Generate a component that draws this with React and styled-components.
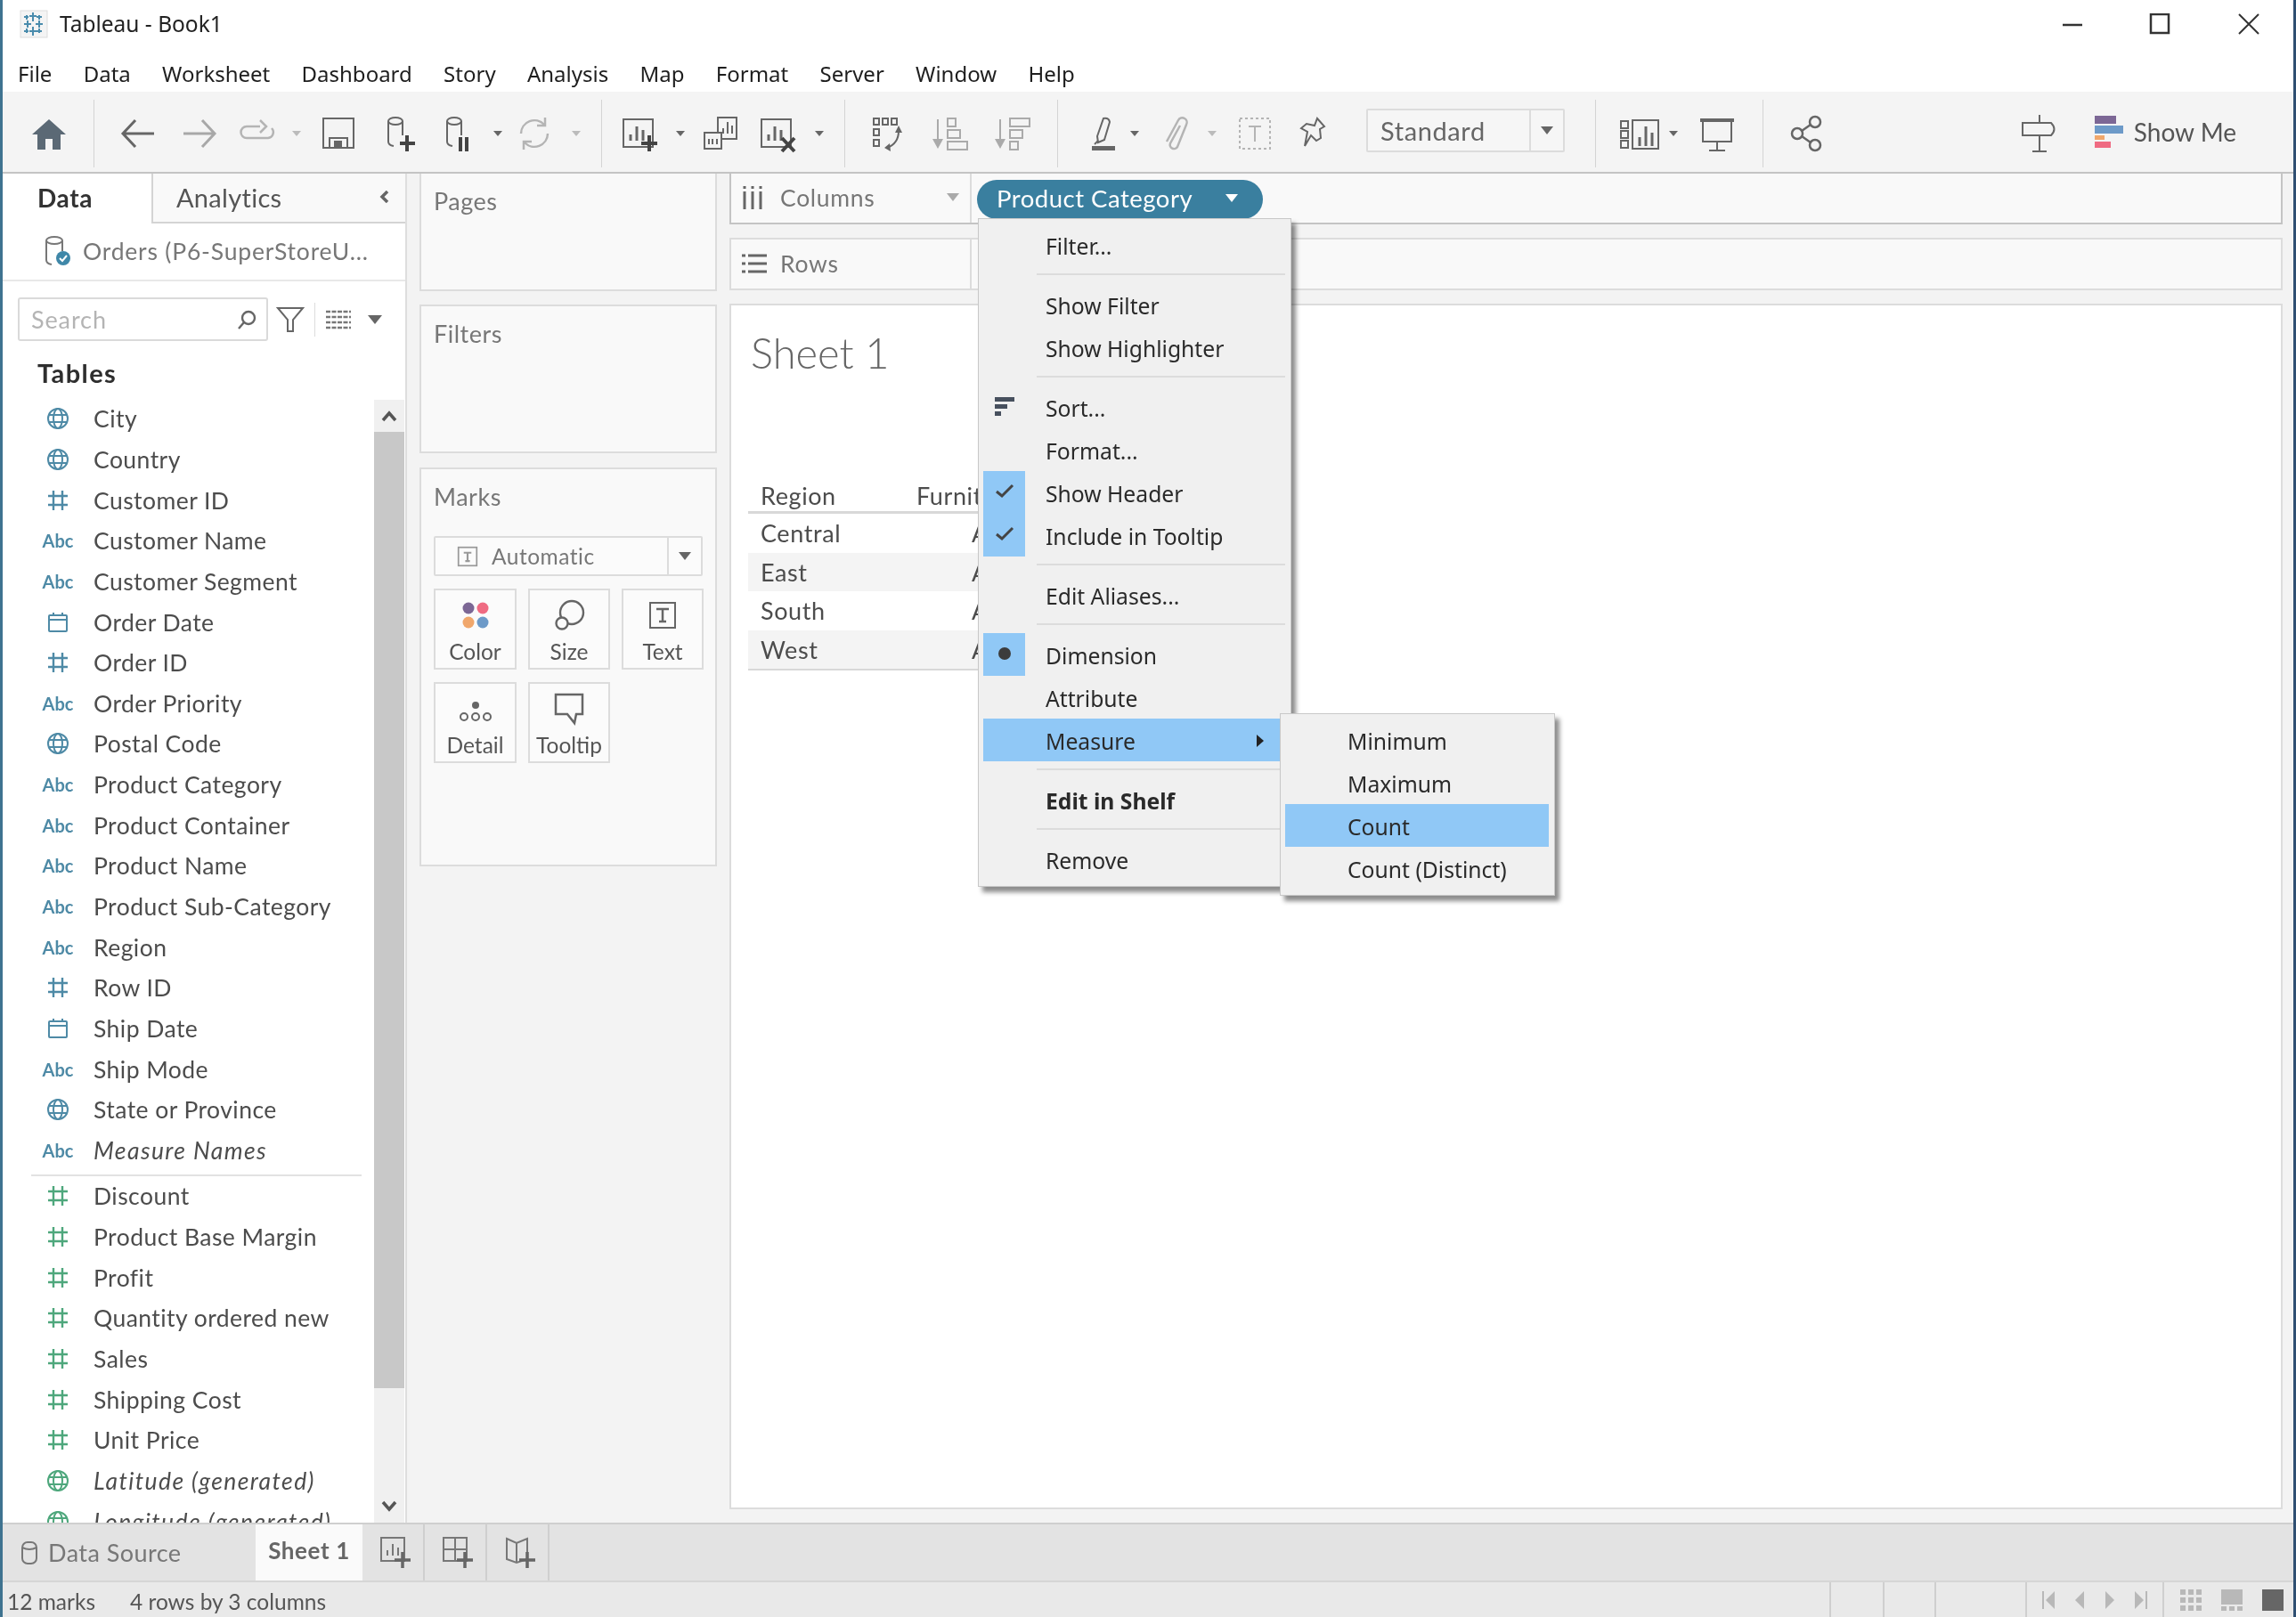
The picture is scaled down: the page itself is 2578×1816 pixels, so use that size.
import React from 'react';
import styled, { createGlobalStyle } from 'styled-components';

const GlobalStyle = createGlobalStyle`
    html, body {
        margin : 0;
        padding : 0;
        background : #fff;
        overflow : hidden;
    }
`;

const Shell = styled.div`
    position : relative;
    width : 2578px;
    height : 1816px;
    box-sizing : border-box;
    display : flex;
    flex-direction : column;
    overflow : hidden;
    border-left : 3px solid #3f7390;
    border-right : 3px solid #2f4f72;
    background : #f3f3f3;
    font-family : 'Lato', 'Liberation Sans', sans-serif;
    filter : blur(0.7px);
`;

const TitleBar = styled.div`
    height : 56px;
    box-sizing : border-box;
    background : #fff;
    display : flex;
    align-items : center;
    padding-left : 19px;
    padding-bottom : 3px;
    font-family : 'Noto Sans', 'Liberation Sans', sans-serif;
    font-size : 24.5px;
    color : #222;
`;

const TitleText = styled.span`
    margin-left : 13px;
`;

const WindowControls = styled.div`
    margin-left : auto;
    display : flex;
    align-items : center;
    padding-right : 38px;
    gap : 64px;
`;

const MenuBar = styled.div`
    height : 47px;
    background : #fff;
    display : flex;
    align-items : center;
    gap : 35.3px;
    padding-left : 17px;
    padding-top : 5px;
    box-sizing : border-box;
    font-family : 'Noto Sans', 'Liberation Sans', sans-serif;
    font-size : 24px;
    color : #1e1e1e;
`;

const Toolbar = styled.div`
    height : 90px;
    background : #f4f4f4;
    display : flex;
    align-items : center;
    padding-right : 64px;
    flex : none;
`;

const ToolSlot = styled.div`
    width : 44px;
    height : 44px;
    flex : none;
    margin-left : ${p => (p.$push ? 'auto' : `${p.$gap || 0}px`)};
    margin-top : 4px;
`;

const ToolCaret = styled.div`
    width : 16px;
    flex : none;
    display : flex;
    justify-content : center;
    margin-left : ${p => p.$gap || 0}px;
    margin-top : 4px;
`;

const Caret = styled.span`
    display : block;
    width : 0;
    height : 0;
    border-left : ${p => p.$size || 5}px solid transparent;
    border-right : ${p => p.$size || 5}px solid transparent;
    border-top : ${p => (p.$size || 5) * 1.3}px solid ${p => p.$color || '#666'};
`;

const ToolSep = styled.div`
    width : 1px;
    height : 76px;
    flex : none;
    background : #d4d4d4;
    margin-left : ${p => p.$gap || 0}px;
    margin-top : 4px;
`;

const StandardSelect = styled.div`
    width : 223px;
    height : 49px;
    flex : none;
    box-sizing : border-box;
    margin-left : ${p => p.$gap}px;
    margin-top : -3px;
    background : #f6f6f6;
    border : 2px solid #dcdcdc;
    border-radius : 2px;
    display : flex;
    align-items : center;
    padding-left : 14px;
    font-size : 29px;
    letter-spacing : .6px;
    color : #666;
`;

const SelectButton = styled.div`
    margin-left : auto;
    width : 36px;
    height : 100%;
    border-left : 2px solid #dcdcdc;
    display : flex;
    align-items : center;
    justify-content : center;
`;

const ShowMe = styled.div`
    margin-left : 40px;
    display : flex;
    align-items : center;
    gap : 12px;
    font-size : 28px;
    color : #555;
`;

const Main = styled.div`
    flex : 1;
    min-height : 0;
    display : flex;
    border-top : 2px solid #c4c4c4;
`;

const Sidebar = styled.div`
    width : 454px;
    flex : none;
    background : #fff;
    border-right : 2px solid #dedede;
    box-sizing : border-box;
    display : flex;
    flex-direction : column;
    min-height : 0;
`;

const TabRow = styled.div`
    height : 56px;
    flex : none;
    display : flex;
`;

const DataTab = styled.div`
    width : 167px;
    box-sizing : border-box;
    padding : 0 0 3px 39px;
    display : flex;
    align-items : center;
    font-size : 28px;
    font-weight : 700;
    letter-spacing : .6px;
    color : #333;
`;

const AnalyticsTab = styled.div`
    flex : 1;
    box-sizing : border-box;
    padding : 0 14px 2px 26px;
    display : flex;
    align-items : center;
    justify-content : space-between;
    background : #f9f9f9;
    border-left : 2px solid #d4d4d4;
    border-bottom : 2px solid #d4d4d4;
    font-size : 29px;
    letter-spacing : .3px;
    color : #555;
`;

const SourceRow = styled.div`
    height : 65px;
    flex : none;
    box-sizing : border-box;
    display : flex;
    align-items : center;
    padding-left : 47px;
    gap : 13px;
    border-bottom : 2px solid #e8e8e8;
    font-size : 26.5px;
    letter-spacing : .8px;
    color : #777;
    padding-bottom : 2px;
`;

const SearchRow = styled.div`
    height : 68px;
    flex : none;
    display : flex;
    align-items : center;
    padding-left : 17px;
    padding-top : 17px;
    box-sizing : border-box;
`;

const SearchBox = styled.div`
    width : 281px;
    height : 49px;
    box-sizing : border-box;
    border : 2px solid #dadada;
    border-radius : 3px;
    display : flex;
    align-items : center;
    justify-content : space-between;
    padding : 0 10px 0 13px;
    font-size : 27px;
    letter-spacing : .9px;
    color : #b4b4b4;
`;

const SearchSep = styled.div`
    width : 1px;
    height : 38px;
    background : #dcdcdc;
    margin : 0 12px 0 11px;
`;

const TablesTitle = styled.div`
    height : 63.5px;
    flex : none;
    box-sizing : border-box;
    padding : 6px 0 0 39px;
    display : flex;
    align-items : center;
    font-size : 29px;
    font-weight : 700;
    letter-spacing : 1.4px;
    color : #2e2e2e;
`;

const FieldArea = styled.div`
    flex : 1;
    min-height : 0;
    display : flex;
    overflow : hidden;
`;

const FieldList = styled.div`
    flex : 1;
    min-width : 0;
    overflow : hidden;
`;

const FieldRow = styled.div`
    height : 45.65px;
    display : flex;
    align-items : center;
    font-size : 26.5px;
    letter-spacing : ${p => (p.$italic ? '1.4px' : '.45px')};
    color : #4c4c4c;
    font-style : ${p => (p.$italic ? 'italic' : 'normal')};
`;

const FieldIcon = styled.div`
    width : 66px;
    flex : none;
    margin-left : 29px;
    margin-right : 7px;
    display : flex;
    justify-content : center;
`;

const AbcIcon = styled.span`
    font-size : 20px;
    font-weight : 700;
    font-style : normal;
    letter-spacing : 0;
    color : #4e8aa6;
`;

const FieldDivider = styled.div`
    height : 4px;
    margin : 0 14px 0 32px;
    border-bottom : 2px solid #e2e2e2;
`;

const ScrollBar = styled.div`
    width : 34px;
    flex : none;
    display : flex;
    flex-direction : column;
    background : #f0f0f0;
    margin : 1px 1px 0 0;
`;

const ScrollButton = styled.div`
    height : ${p => p.$h}px;
    flex : none;
    display : flex;
    align-items : center;
    justify-content : center;
`;

const ScrollThumb = styled.div`
    height : 1074px;
    flex : none;
    background : #c8c8c8;
`;

const ShelfColumn = styled.div`
    width : 334px;
    flex : none;
    margin-left : 14px;
    display : flex;
    flex-direction : column;
    gap : 15px;
`;

const Card = styled.div`
    height : ${p => p.$h}px;
    flex : none;
    box-sizing : border-box;
    background : #f9f9f9;
    border : 2px solid #dcdcdc;
    padding : 14px 14px 0;
    font-size : 27px;
    letter-spacing : .5px;
    color : #777;
`;

const TopCard = styled(Card)`
    border-top : none;
    padding-top : 14px;
`;

const MarksCard = styled(Card)`
    margin-top : 1px;
`;

const MarksSelect = styled.div`
    height : 45px;
    box-sizing : border-box;
    margin-top : 28px;
    background : #fbfbfb;
    border : 2px solid #dcdcdc;
    border-radius : 2px;
    display : flex;
    align-items : center;
    padding-left : 24px;
    gap : 15px;
    font-size : 24.5px;
    color : #777;
`;

const MarksGrid = styled.div`
    margin-top : 14px;
    display : grid;
    grid-template-columns : 93px 92px 92px;
    grid-auto-rows : 91px;
    column-gap : 13px;
    row-gap : 14px;
`;

const MarkCard = styled.div`
    box-sizing : border-box;
    border : 2px solid #dcdcdc;
    background : #fbfbfb;
    display : flex;
    flex-direction : column;
    align-items : center;
    font-size : 24.5px;
    letter-spacing : 0;
    color : #555;
`;

const MarkIconBox = styled.div`
    height : 44px;
    margin-top : 6px;
    margin-bottom : 4px;
`;

const ViewColumn = styled.div`
    flex : 1;
    min-width : 0;
    margin-left : 14px;
    margin-right : 12px;
    display : flex;
    flex-direction : column;
    gap : 15px;
    padding-bottom : 15px;
`;

const Shelf = styled.div`
    height : ${p => p.$h}px;
    flex : none;
    box-sizing : border-box;
    display : flex;
    background : #f9f9f9;
    border : 2px solid ${p => (p.$active ? '#c4c4c4' : '#dcdcdc')};
    border-top : ${p => (p.$active ? 'none' : '2px solid #dcdcdc')};
`;

const ShelfLabel = styled.div`
    width : 270px;
    flex : none;
    box-sizing : border-box;
    border-right : 2px solid #dcdcdc;
    display : flex;
    align-items : center;
    padding : 0 0 2px 12px;
    gap : ${p => p.$gap}px;
    font-size : 26.5px;
    letter-spacing : .7px;
    color : #777;
`;

const ShelfCaret = styled.div`
    margin-left : auto;
    margin-right : 12px;
`;

const Pill = styled.div`
    width : 321px;
    height : 44px;
    margin : 7px 0 0 6px;
    box-sizing : border-box;
    padding : 0 28px 3px 22px;
    background : #3a7f9f;
    border-radius : 22px;
    display : flex;
    align-items : center;
    justify-content : space-between;
    font-size : 27.5px;
    letter-spacing : .5px;
    color : #fff;
`;

const Canvas = styled.div`
    flex : 1;
    min-height : 0;
    box-sizing : border-box;
    background : #fff;
    border : 2px solid #dcdcdc;
    padding : 25px 0 0 22px;
`;

const SheetTitle = styled.div`
    height : 56px;
    line-height : 56px;
    font-size : 47px;
    font-weight : 300;
    color : #666;
`;

const VizTable = styled.div`
    margin-top : 115px;
    margin-left : -3px;
    width : 310px;
    font-size : 27px;
    letter-spacing : .6px;
    color : #4c4c4c;
`;

const VizRow = styled.div`
    height : 43.6px;
    display : flex;
    align-items : center;
    box-sizing : border-box;
    padding-left : 14px;
    background : ${p => (p.$shade ? '#f4f4f4' : '#fff')};
`;

const VizHeader = styled(VizRow)`
    height : 38px;
    border-bottom : 3px solid #d8d8d8;
`;

const VizBottom = styled.div`
    border-bottom : 2px solid #d8d8d8;
`;

const RowName = styled.span`
    width : 175px;
    flex : none;
`;

const RowValue = styled.span`
    margin-left : 62px;
`;

const Menu = styled.div`
    position : absolute;
    left : ${p => p.$x}px;
    top : ${p => p.$y}px;
    width : ${p => p.$w}px;
    box-sizing : border-box;
    padding : 5px 6px 6px 5px;
    background : #f0f0f0;
    border : 1px solid #c8c8c8;
    box-shadow : 5px 6px 5px rgba(0, 0, 0, .45);
    font-family : 'Noto Sans', 'Liberation Sans', sans-serif;
    font-size : 24.7px;
    color : #2a2a2a;
`;

const MenuRow = styled.div`
    height : 48px;
    box-sizing : border-box;
    padding-top : 2px;
    display : flex;
    align-items : center;
    background : ${p => (p.$hot ? '#90c8f6' : 'transparent')};
    font-weight : ${p => (p.$bold ? 700 : 400)};
`;

const MenuGutter = styled.div`
    width : 47px;
    height : 48px;
    margin-top : -2px;
    flex : none;
    display : flex;
    align-items : center;
    justify-content : center;
    margin-right : 23px;
    background : ${p => (p.$on ? '#90c8f6' : 'transparent')};
`;

const MenuSep = styled.div`
    height : 19px;
    box-sizing : border-box;
    margin-left : 60px;
    padding-top : 8px;
    &::after {
        content : '';
        display : block;
        height : 2px;
        background : #dcdcdc;
    }
`;

const SubmenuArrow = styled.span`
    margin-left : auto;
    margin-right : 24px;
    width : 0;
    height : 0;
    border-top : 7px solid transparent;
    border-bottom : 7px solid transparent;
    border-left : 8px solid #222;
`;

const SubRow = styled(MenuRow)`
    padding-left : 70px;
`;

const TabBar = styled.div`
    height : 65px;
    flex : none;
    display : flex;
    background : #e3e3e3;
    border-top : 2px solid #cfcfcf;
    box-sizing : border-box;
    font-size : 27px;
    letter-spacing : .45px;
    color : #777;
`;

const SourceTab = styled.div`
    width : 284px;
    flex : none;
    display : flex;
    align-items : center;
    padding-left : 20px;
    gap : 11px;
    box-sizing : border-box;
`;

const SheetTab = styled.div`
    width : 120px;
    flex : none;
    display : flex;
    align-items : center;
    justify-content : center;
    padding-bottom : 6px;
    box-sizing : border-box;
    background : #fafafa;
    font-weight : 700;
    font-size : 26px;
    letter-spacing : .6px;
    color : #666;
`;

const AddTab = styled.div`
    width : 70px;
    flex : none;
    box-sizing : border-box;
    border-right : 2px solid #cfcfcf;
    padding-left : 6px;
    display : flex;
    align-items : center;
    justify-content : center;
`;

const StatusBar = styled.div`
    height : 41px;
    flex : none;
    box-sizing : border-box;
    display : flex;
    align-items : center;
    background : #e9e9e9;
    border-top : 2px solid #d6d6d6;
    padding-left : 5px;
    font-size : 24.5px;
    color : #555;
`;

const StatusText = styled.span`
    margin-right : ${p => p.$gap || 0}px;
    margin-top : 4px;
`;

const StatusCell = styled.div`
    width : ${p => p.$w}px;
    flex : none;
    align-self : stretch;
    box-sizing : border-box;
    padding-left : ${p => p.$pad || 0}px;
    border-left : 2px solid #cfcfcf;
    display : flex;
    align-items : center;
    justify-content : center;
    gap : ${p => p.$gap || 0}px;
`;

const StatusFill = styled.div`
    flex : 1;
`;

const Svg = ({ w = 44, h = 44, c = '#666', sw = 2, children }) => (
    <svg width = {w} height = {h} viewBox = {`0 0 ${w} ${h}`} fill = 'none' stroke = {c} strokeWidth = {sw} style = {{ display : 'block' }}>
        {children}
    </svg>
);

const Cylinder = () => (
    <>
        <ellipse cx = '17' cy = '8' rx = '8' ry = '4'/>
        <path d = 'M9 8V31q0 4 6 5M25 8V24'/>
    </>
);

const LIGHT = '#b4b4b4';

const toolIcons = {
    home : (
        <Svg><path fill = '#5b6975' stroke = 'none' d = 'M22 6L41 23H35V40H26V28H18V40H9V23H3Z'/></Svg>
    ),
    back : (
        <Svg sw = {3}><path d = 'M40 22H5M19 7L5 22L19 37'/></Svg>
    ),
    forward : (
        <Svg sw = {3} c = '#a8a8a8'><path d = 'M4 22H39M25 7L39 22L25 37'/></Svg>
    ),
    redo : (
        <Svg c = {LIGHT} sw = {2.5}><path d = 'M25 14H10a6.5 6.5 0 0 0 0 13H34a6.5 6.5 0 0 0 4-11M25 7l7 7-7 7'/></Svg>
    ),
    save : (
        <Svg><rect x = '5' y = '5' width = '34' height = '33'/><rect x = '12' y = '27' width = '20' height = '11'/><rect x = '18' y = '31' width = '7' height = '7' fill = '#666'/></Svg>
    ),
    addSource : (
        <Svg>
            <Cylinder/>
            <path stroke = '#444' strokeWidth = '4' d = 'M30 24V42M22 33H39'/>
        </Svg>
    ),
    pauseSource : (
        <Svg>
            <Cylinder/>
            <path stroke = '#444' strokeWidth = '4' d = 'M24 26V42M31 26V42'/>
        </Svg>
    ),
    refresh : (
        <Svg c = {LIGHT} sw = {2.5}><path d = 'M7 22a15 15 0 0 1 26-10M37 22a15 15 0 0 1-26 10M34 4v9h-9M10 40v-9h9'/></Svg>
    ),
    newSheet : (
        <Svg>
            <rect x = '3' y = '6' width = '33' height = '31'/>
            <path strokeWidth = '3' d = 'M11 30V23M18 30V14M25 30V18'/>
            <path stroke = '#444' strokeWidth = '4' d = 'M32 24V42M23 33H41'/>
        </Svg>
    ),
    duplicate : (
        <Svg>
            <rect x = '19' y = '4' width = '21' height = '24'/>
            <path d = 'M25 22V16M30 22V9M35 22V13'/>
            <rect x = '4' y = '21' width = '19' height = '18' fill = '#f4f4f4'/>
            <path d = 'M9 34V28M13 34V28M18 34V28'/>
        </Svg>
    ),
    clear : (
        <Svg>
            <rect x = '3' y = '6' width = '33' height = '31'/>
            <path strokeWidth = '3' d = 'M11 30V23M18 30V14M25 30V18'/>
            <path stroke = '#444' strokeWidth = '4' d = 'M26 27L40 42M40 27L26 42'/>
        </Svg>
    ),
    swap : (
        <Svg>
            <rect x = '7' y = '5' width = '6' height = '7'/>
            <rect x = '17' y = '5' width = '6' height = '7'/>
            <rect x = '27' y = '5' width = '6' height = '7'/>
            <rect x = '7' y = '17' width = '6' height = '7'/>
            <rect x = '7' y = '29' width = '6' height = '7'/>
            <path d = 'M35 19c0 10-5 16-13 19'/>
            <path fill = '#666' stroke = 'none' d = 'M35 13l4 8h-8zM19 38l6-5 1 9z'/>
        </Svg>
    ),
    sortAsc : (
        <Svg c = '#aaa'>
            <path d = 'M8 6V36'/>
            <path fill = '#aaa' stroke = 'none' d = 'M2 28H14L8 39Z'/>
            <rect x = '19' y = '5' width = '9' height = '9'/>
            <rect x = '19' y = '18' width = '14' height = '9'/>
            <rect x = '19' y = '31' width = '22' height = '9'/>
        </Svg>
    ),
    sortDesc : (
        <Svg c = '#aaa'>
            <path d = 'M8 6V36'/>
            <path fill = '#aaa' stroke = 'none' d = 'M2 28H14L8 39Z'/>
            <rect x = '19' y = '5' width = '22' height = '9'/>
            <rect x = '19' y = '18' width = '14' height = '9'/>
            <rect x = '19' y = '31' width = '9' height = '9'/>
        </Svg>
    ),
    highlight : (
        <Svg>
            <path d = 'M24 5Q30 4 31 9L25 29L18 32L17 25Z'/>
            <path d = 'M14 34L18 30'/>
            <rect x = '11' y = '36' width = '26' height = '5' fill = '#666' stroke = 'none'/>
        </Svg>
    ),
    clip : (
        <Svg c = {LIGHT} sw = {2.5}>
            <path d = 'M29 13L18 33a4.5 4.5 0 0 0 8 4L36 12a5 5 0 0 0-9-5L14 31'/>
        </Svg>
    ),
    dashT : (
        <Svg c = {LIGHT}>
            <rect x = '5' y = '5' width = '34' height = '34' strokeDasharray = '3 3'/>
            <path d = 'M15 14H29M22 14V31'/>
        </Svg>
    ),
    pin : (
        <Svg>
            <path d = 'M27 5L35 14L30 17L31 27L26 30L20 24L13 36L16 20L9 16L15 11L24 13Z'/>
        </Svg>
    ),
    view : (
        <Svg>
            <rect x = '1' y = '8' width = '8' height = '8'/>
            <rect x = '1' y = '19' width = '8' height = '8'/>
            <rect x = '1' y = '30' width = '8' height = '8'/>
            <rect x = '14' y = '7' width = '29' height = '32'/>
            <path strokeWidth = '3' d = 'M22 36V26M29 36V14M36 36V21'/>
        </Svg>
    ),
    present : (
        <Svg>
            <path strokeWidth = '4' d = 'M4 7H42'/>
            <path d = 'M7 7V31H39V7M23 31V41M14 41H32'/>
        </Svg>
    ),
    share : (
        <Svg sw = {2.5}>
            <circle cx = '32' cy = '9' r = '6'/>
            <circle cx = '12' cy = '22' r = '6'/>
            <circle cx = '32' cy = '35' r = '6'/>
            <path d = 'M17 19L27 12M17 25L27 32'/>
        </Svg>
    ),
    sign : (
        <Svg>
            <path d = 'M22 1V10M22 24V42M14 42H30'/>
            <path d = 'M3 10H35Q42 17 35 24H3Z'/>
        </Svg>
    ),
};

const ShowMeIcon = () => (
    <svg width = '32' height = '36' viewBox = '0 0 32 36' style = {{ display : 'block' }}>
        <rect x = '0' y = '0' width = '24' height = '9' fill = '#7c6795'/>
        <rect x = '0' y = '11' width = '32' height = '9' fill = '#6d9ac8'/>
        <rect x = '0' y = '22' width = '11' height = '5' fill = '#f0a76c'/>
        <rect x = '0' y = '29' width = '18' height = '7' fill = '#ef6b82'/>
    </svg>
);

const TableauLogo = () => (
    <svg width = '32' height = '32' viewBox = '0 0 32 32' style = {{ display : 'block' }}>
        <rect x = '1' y = '1' width = '30' height = '30' fill = '#f4f4f4' stroke = '#ddd'/>
        <g stroke = '#4a8cad' strokeWidth = '2' fill = 'none'>
            <path d = 'M15 3V13M11 7H19M15 19V29M11 24H19M5 16H13M9 12V20M18 16H26M22 12V20M8 6V11M5 8H10M22 6V11M19 8H25M8 21V26M5 24H10M22 21V26M19 24H25'/>
        </g>
    </svg>
);

const Globe = ({ c }) => (
    <Svg w = {26} h = {26} c = {c} sw = {2}>
        <circle cx = '13' cy = '13' r = '11'/>
        <ellipse cx = '13' cy = '13' rx = '5' ry = '11'/>
        <path d = 'M3 9H23M3 17H23'/>
    </Svg>
);

const Hash = ({ c }) => (
    <Svg w = {26} h = {26} c = {c} sw = {2.4}>
        <path d = 'M8 2V24M18 2V24M2 8H24M2 18H24'/>
    </Svg>
);

const Calendar = ({ c }) => (
    <Svg w = {26} h = {26} c = {c} sw = {2}>
        <rect x = '3' y = '5' width = '20' height = '18' rx = '1'/>
        <path d = 'M3 10H23M8 2V6M18 2V6'/>
    </Svg>
);

const CylinderSmall = () => (
    <svg width = '20' height = '28' viewBox = '0 0 20 28' fill = 'none' stroke = '#777' strokeWidth = '2' style = {{ display : 'block' }}>
        <rect x = '2' y = '2' width = '16' height = '24' rx = '6'/>
        <path d = 'M2 8Q10 12 18 8'/>
    </svg>
);

const SourceIcon = () => (
    <svg width = '30' height = '36' viewBox = '0 0 30 36' fill = 'none' stroke = '#777' strokeWidth = '2' style = {{ display : 'block' }}>
        <ellipse cx = '11' cy = '6' rx = '9' ry = '4'/>
        <path d = 'M2 6V28q0 4 6 5M20 6V18'/>
        <circle cx = '21' cy = '26' r = '8' fill = '#3f87a8' stroke = 'none'/>
        <path stroke = '#fff' d = 'M17 26l3 3 5-6'/>
    </svg>
);

const SearchIcon = () => (
    <svg width = '24' height = '24' viewBox = '0 0 24 24' fill = 'none' stroke = '#666' strokeWidth = '2.4' style = {{ display : 'block' }}>
        <circle cx = '14' cy = '10' r = '7'/>
        <path d = 'M9 15L3 22'/>
    </svg>
);

const FunnelIcon = () => (
    <svg width = '32' height = '30' viewBox = '0 0 32 30' fill = 'none' stroke = '#666' strokeWidth = '2' style = {{ display : 'block', marginLeft : 9 }}>
        <path d = 'M2 2H30L19 15V28H13V15Z'/>
    </svg>
);

const ListIcon = () => (
    <svg width = '28' height = '22' viewBox = '0 0 28 22' stroke = '#777' strokeWidth = '2.5' strokeDasharray = '5 1.5' fill = 'none' style = {{ display : 'block' }}>
        <path d = 'M0 2H28M0 8H28M0 14H28M0 20H28'/>
    </svg>
);

const Chevron = ({ d, c = '#555' }) => (
    <svg width = '18' height = '14' viewBox = '0 0 18 14' fill = 'none' stroke = {c} strokeWidth = '3.5' style = {{ display : 'block' }}>
        <path d = {d}/>
    </svg>
);

const ColumnsIcon = () => (
    <svg width = '24' height = '28' viewBox = '0 0 24 28' fill = 'none' stroke = '#666' strokeWidth = '3' style = {{ display : 'block' }}>
        <path d = 'M3 7V27M12 7V27M21 7V27M3 1V4M12 1V4M21 1V4'/>
    </svg>
);

const RowsIcon = () => (
    <svg width = '28' height = '24' viewBox = '0 0 28 24' fill = 'none' stroke = '#666' strokeWidth = '3' style = {{ display : 'block' }}>
        <path d = 'M7 3H28M7 12H28M7 21H28M0 3H4M0 12H4M0 21H4'/>
    </svg>
);

const TIcon = ({ c = '#777', size = 28 }) => (
    <svg width = {size} height = {size} viewBox = '0 0 28 28' fill = 'none' stroke = {c} strokeWidth = '2' style = {{ display : 'block' }}>
        <rect x = '2' y = '2' width = '24' height = '24'/>
        <path strokeWidth = '2.5' d = 'M9 9H19M14 9V20M11 20H17'/>
    </svg>
);

const markIcons = {
    Color : (
        <svg width = '44' height = '44' viewBox = '0 0 44 44' style = {{ display : 'block' }}>
            <circle cx = '14' cy = '14' r = '6.5' fill = '#7c6795'/>
            <circle cx = '30' cy = '14' r = '6.5' fill = '#ef6b82'/>
            <circle cx = '14' cy = '30' r = '6.5' fill = '#f0a76c'/>
            <circle cx = '30' cy = '30' r = '6.5' fill = '#6d9ac8'/>
        </svg>
    ),
    Size : (
        <Svg sw = {2.4}>
            <circle cx = '25' cy = '19' r = '13'/>
            <circle cx = '14' cy = '31' r = '6.5' fill = '#fbfbfb'/>
        </Svg>
    ),
    Text : (
        <Svg>
            <rect x = '8' y = '8' width = '28' height = '28'/>
            <path strokeWidth = '2.5' d = 'M15 15H29M22 15V29M18 29H26'/>
        </Svg>
    ),
    Detail : (
        <Svg>
            <circle cx = '22' cy = '18' r = '4' fill = '#666' stroke = 'none'/>
            <circle cx = '9' cy = '31' r = '4'/>
            <circle cx = '22' cy = '31' r = '4'/>
            <circle cx = '35' cy = '31' r = '4'/>
        </Svg>
    ),
    Tooltip : (
        <Svg sw = {2.5}>
            <path d = 'M7 6H37V28H30L28 38L20 28H7Z'/>
        </Svg>
    ),
};

const BLUE = '#4e8aa6';
const GREEN = '#4ea77c';

const dimensions = [
    ['globe', 'City'],
    ['globe', 'Country'],
    ['hash', 'Customer ID'],
    ['abc', 'Customer Name'],
    ['abc', 'Customer Segment'],
    ['date', 'Order Date'],
    ['hash', 'Order ID'],
    ['abc', 'Order Priority'],
    ['globe', 'Postal Code'],
    ['abc', 'Product Category'],
    ['abc', 'Product Container'],
    ['abc', 'Product Name'],
    ['abc', 'Product Sub-Category'],
    ['abc', 'Region'],
    ['hash', 'Row ID'],
    ['date', 'Ship Date'],
    ['abc', 'Ship Mode'],
    ['globe', 'State or Province'],
    ['abc', 'Measure Names', true],
];

const measures = [
    ['hash', 'Discount'],
    ['hash', 'Product Base Margin'],
    ['hash', 'Profit'],
    ['hash', 'Quantity ordered new'],
    ['hash', 'Sales'],
    ['hash', 'Shipping Cost'],
    ['hash', 'Unit Price'],
    ['globe', 'Latitude (generated)', true],
    ['globe', 'Longitude (generated)', true],
];

const Field = ({ type, name, italic, color }) => (
    <FieldRow $italic = {italic}>
        <FieldIcon>
            {type === 'globe' && <Globe c = {color}/>}
            {type === 'hash' && <Hash c = {color}/>}
            {type === 'date' && <Calendar c = {color}/>}
            {type === 'abc' && <AbcIcon>Abc</AbcIcon>}
        </FieldIcon>
        {name}
    </FieldRow>
);

const menuBarItems = ['File', 'Data', 'Worksheet', 'Dashboard', 'Story', 'Analysis', 'Map', 'Format', 'Server', 'Window', 'Help'];

const Check = () => (
    <svg width = '24' height = '20' viewBox = '0 0 24 20' fill = 'none' stroke = '#444' strokeWidth = '3' style = {{ display : 'block', marginTop : -4 }}>
        <path d = 'M3 11L9 16L21 4'/>
    </svg>
);

const SortGlyph = () => (
    <svg width = '24' height = '22' viewBox = '0 0 24 22' fill = '#47505e' style = {{ display : 'block', marginTop : -2 }}>
        <rect x = '1' y = '1' width = '22' height = '5'/>
        <rect x = '1' y = '9' width = '14' height = '5'/>
        <rect x = '1' y = '17' width = '7' height = '5'/>
    </svg>
);

const Dot = () => (
    <svg width = '16' height = '16' viewBox = '0 0 16 16' style = {{ display : 'block', marginTop : -2 }}>
        <circle cx = '8' cy = '8' r = '7' fill = '#3c3c3c'/>
    </svg>
);

const MItem = ({ icon, on, hot, bold, children, arrow }) => (
    <MenuRow $hot = {hot} $bold = {bold}>
        <MenuGutter $on = {on}>{icon}</MenuGutter>
        {children}
        {arrow && <SubmenuArrow/>}
    </MenuRow>
);

const NavIcon = ({ d }) => (
    <svg width = '16' height = '24' viewBox = '0 0 16 24' fill = '#b8b8b8' style = {{ display : 'block' }}>
        <path d = {d}/>
    </svg>
);

const GridIcon = ({ big, dark }) => (
    <svg width = '26' height = '26' viewBox = '0 0 26 26' fill = {dark ? '#666' : '#b8b8b8'} style = {{ display : 'block' }}>
        {dark && <rect x = '1' y = '1' width = '24' height = '24'/>}
        {big && <><rect x = '1' y = '1' width = '24' height = '17'/><rect x = '1' y = '20' width = '6' height = '5'/><rect x = '10' y = '20' width = '6' height = '5'/><rect x = '19' y = '20' width = '6' height = '5'/></>}
        {!big && !dark && [1, 10, 19].map(y => [1, 10, 19].map(x => <rect key = {`${x}-${y}`} x = {x} y = {y} width = '6' height = '6'/>))}
    </svg>
);

const TabIcon = ({ children }) => (
    <svg width = '36' height = '38' viewBox = '0 0 36 38' fill = 'none' stroke = '#777' strokeWidth = '2' style = {{ display : 'block' }}>
        {children}
        <path stroke = '#666' strokeWidth = '3.5' d = 'M26 18V36M17 27H35'/>
    </svg>
);

const App = () => {
    return (
        <Shell>
            <GlobalStyle/>
            <TitleBar>
                <TableauLogo/>
                <TitleText>Tableau - Book1</TitleText>
                <WindowControls>
                    <svg width = '24' height = '24' viewBox = '0 0 24 24' stroke = '#333' strokeWidth = '2.5' fill = 'none' style = {{ display : 'block', marginRight : 10 }}><path d = 'M1 13H23'/></svg>
                    <svg width = '24' height = '24' viewBox = '0 0 24 24' stroke = '#333' strokeWidth = '2.5' fill = 'none' style = {{ display : 'block', marginRight : 12 }}><rect x = '2' y = '1' width = '20' height = '21'/></svg>
                    <svg width = '24' height = '24' viewBox = '0 0 24 24' stroke = '#333' strokeWidth = '2' fill = 'none' style = {{ display : 'block' }}><path d = 'M1 1L23 23M23 1L1 23'/></svg>
                </WindowControls>
            </TitleBar>
            <MenuBar>
                {menuBarItems.map(item => <span key = {item}>{item}</span>)}
            </MenuBar>
            <Toolbar>
                <ToolSlot $gap = {30}>{toolIcons.home}</ToolSlot>
                <ToolSep $gap = {28}/>
                <ToolSlot $gap = {27}>{toolIcons.back}</ToolSlot>
                <ToolSlot $gap = {25}>{toolIcons.forward}</ToolSlot>
                <ToolSlot $gap = {21}>{toolIcons.redo}</ToolSlot>
                <ToolCaret $gap = {14}><Caret $color = '#bbb'/></ToolCaret>
                <ToolSlot $gap = {17}>{toolIcons.save}</ToolSlot>
                <ToolSlot $gap = {25}>{toolIcons.addSource}</ToolSlot>
                <ToolSlot $gap = {22}>{toolIcons.pauseSource}</ToolSlot>
                <ToolCaret $gap = {14}><Caret/></ToolCaret>
                <ToolSlot $gap = {11}>{toolIcons.refresh}</ToolSlot>
                <ToolCaret $gap = {17}><Caret $color = '#bbb'/></ToolCaret>
                <ToolSep $gap = {20}/>
                <ToolSlot $gap = {21}>{toolIcons.newSheet}</ToolSlot>
                <ToolCaret $gap = {15}><Caret/></ToolCaret>
                <ToolSlot $gap = {15}>{toolIcons.duplicate}</ToolSlot>
                <ToolSlot $gap = {21}>{toolIcons.clear}</ToolSlot>
                <ToolCaret $gap = {16}><Caret/></ToolCaret>
                <ToolSep $gap = {20}/>
                <ToolSlot $gap = {25}>{toolIcons.swap}</ToolSlot>
                <ToolSlot $gap = {27}>{toolIcons.sortAsc}</ToolSlot>
                <ToolSlot $gap = {26}>{toolIcons.sortDesc}</ToolSlot>
                <ToolSep $gap = {28}/>
                <ToolSlot $gap = {27}>{toolIcons.highlight}</ToolSlot>
                <ToolCaret $gap = {7}><Caret/></ToolCaret>
                <ToolSlot $gap = {14}>{toolIcons.clip}</ToolSlot>
                <ToolCaret $gap = {13}><Caret $color = '#bbb'/></ToolCaret>
                <ToolSlot $gap = {18}>{toolIcons.dashT}</ToolSlot>
                <ToolSlot $gap = {21}>{toolIcons.pin}</ToolSlot>
                <StandardSelect $gap = {38}>
                    Standard
                    <SelectButton><Caret $size = {7}/></SelectButton>
                </StandardSelect>
                <ToolSep $gap = {34}/>
                <ToolSlot $gap = {27}>{toolIcons.view}</ToolSlot>
                <ToolCaret $gap = {8}><Caret/></ToolCaret>
                <ToolSlot $gap = {18}>{toolIcons.present}</ToolSlot>
                <ToolSep $gap = {30}/>
                <ToolSlot $gap = {26}>{toolIcons.share}</ToolSlot>
                <ToolSlot $push>{toolIcons.sign}</ToolSlot>
                <ShowMe>
                    <ShowMeIcon/>
                    Show Me
                </ShowMe>
            </Toolbar>
            <Main>
                <Sidebar>
                    <TabRow>
                        <DataTab>Data</DataTab>
                        <AnalyticsTab>
                            Analytics
                            <Chevron d = 'M12 1L6 7L12 13' c = '#666'/>
                        </AnalyticsTab>
                    </TabRow>
                    <SourceRow>
                        <SourceIcon/>
                        Orders (P6-SuperStoreU...
                    </SourceRow>
                    <SearchRow>
                        <SearchBox>
                            Search
                            <SearchIcon/>
                        </SearchBox>
                        <FunnelIcon/>
                        <SearchSep/>
                        <ListIcon/>
                        <span style = {{ marginLeft : 19 }}><Caret $size = {8}/></span>
                    </SearchRow>
                    <TablesTitle>Tables</TablesTitle>
                    <FieldArea>
                        <FieldList>
                            {dimensions.map(([type, name, italic]) => (
                                <Field key = {name} type = {type} name = {name} italic = {italic} color = {BLUE}/>
                            ))}
                            <FieldDivider/>
                            {measures.map(([type, name, italic]) => (
                                <Field key = {name} type = {type} name = {name} italic = {italic} color = {GREEN}/>
                            ))}
                        </FieldList>
                        <ScrollBar>
                            <ScrollButton $h = {36}><Chevron d = 'M2 12L9 4L16 12'/></ScrollButton>
                            <ScrollThumb/>
                            <StatusFill/>
                            <ScrollButton $h = {36}><Chevron d = 'M2 2L9 10L16 2'/></ScrollButton>
                        </ScrollBar>
                    </FieldArea>
                </Sidebar>
                <ShelfColumn>
                    <TopCard $h = {132}>Pages</TopCard>
                    <Card $h = {167}>Filters</Card>
                    <MarksCard $h = {448}>
                        Marks
                        <MarksSelect>
                            <TIcon size = {24} c = '#999'/>
                            Automatic
                            <SelectButton><Caret $size = {7}/></SelectButton>
                        </MarksSelect>
                        <MarksGrid>
                            {['Color', 'Size', 'Text', 'Detail', 'Tooltip'].map(name => (
                                <MarkCard key = {name}>
                                    <MarkIconBox>{markIcons[name]}</MarkIconBox>
                                    {name}
                                </MarkCard>
                            ))}
                        </MarksGrid>
                    </MarksCard>
                </ShelfColumn>
                <ViewColumn>
                    <Shelf $h = {57} $active>
                        <ShelfLabel $gap = {19}>
                            <ColumnsIcon/>
                            Columns
                            <ShelfCaret><Caret $size = {7} $color = '#aaa'/></ShelfCaret>
                        </ShelfLabel>
                        <Pill>
                            Product Category
                            <Caret $size = {7} $color = '#fff'/>
                        </Pill>
                    </Shelf>
                    <Shelf $h = {59}>
                        <ShelfLabel $gap = {15}>
                            <RowsIcon/>
                            Rows
                        </ShelfLabel>
                    </Shelf>
                    <Canvas>
                        <SheetTitle>Sheet 1</SheetTitle>
                        <VizTable>
                            <VizHeader><RowName>Region</RowName>Furniture</VizHeader>
                            <VizRow><RowName>Central</RowName><RowValue>Abc</RowValue></VizRow>
                            <VizRow $shade><RowName>East</RowName><RowValue>Abc</RowValue></VizRow>
                            <VizRow><RowName>South</RowName><RowValue>Abc</RowValue></VizRow>
                            <VizBottom>
                                <VizRow $shade><RowName>West</RowName><RowValue>Abc</RowValue></VizRow>
                            </VizBottom>
                        </VizTable>
                    </Canvas>
                </ViewColumn>
            </Main>
            <TabBar>
                <SourceTab>
                    <CylinderSmall/>
                    Data Source
                </SourceTab>
                <SheetTab>Sheet 1</SheetTab>
                <AddTab>
                    <TabIcon>
                        <rect x = '2' y = '2' width = '26' height = '26'/>
                        <path d = 'M9 22V16M15 22V9M21 22V13'/>
                    </TabIcon>
                </AddTab>
                <AddTab>
                    <TabIcon>
                        <rect x = '2' y = '2' width = '26' height = '26'/>
                        <path d = 'M2 15H28M15 2V28'/>
                    </TabIcon>
                </AddTab>
                <AddTab>
                    <TabIcon>
                        <path d = 'M3 3L14 8L26 3V26L14 30L3 26ZM14 8V30'/>
                    </TabIcon>
                </AddTab>
            </TabBar>
            <StatusBar>
                <StatusText $gap = {39}>12 marks</StatusText>
                <StatusText>4 rows by 3 columns</StatusText>
                <StatusFill/>
                <StatusCell $w = {60}/>
                <StatusCell $w = {58}/>
                <StatusCell $w = {102}/>
                <StatusCell $w = {154} $gap = {18.5}>
                    <NavIcon d = 'M1 2H3V22H1ZM15 2V22L5 12Z'/>
                    <NavIcon d = 'M13 2V22L3 12Z'/>
                    <NavIcon d = 'M3 2V22L13 12Z'/>
                    <NavIcon d = 'M1 2V22L11 12ZM13 2H15V22H13Z'/>
                </StatusCell>
                <StatusCell $w = {147} $gap = {20} $pad = {6}>
                    <GridIcon/>
                    <GridIcon big/>
                    <GridIcon dark/>
                </StatusCell>
            </StatusBar>
            <Menu $x = {1095} $y = {245} $w = {352}>
                <MItem>Filter...</MItem>
                <MenuSep/>
                <MItem>Show Filter</MItem>
                <MItem>Show Highlighter</MItem>
                <MenuSep/>
                <MItem icon = {<SortGlyph/>}>Sort...</MItem>
                <MItem>Format...</MItem>
                <MItem on icon = {<Check/>}>Show Header</MItem>
                <MItem on icon = {<Check/>}>Include in Tooltip</MItem>
                <MenuSep/>
                <MItem>Edit Aliases...</MItem>
                <MenuSep/>
                <MItem on icon = {<Dot/>}>Dimension</MItem>
                <MItem>Attribute</MItem>
                <MItem hot arrow>Measure</MItem>
                <MenuSep/>
                <MItem bold>Edit in Shelf</MItem>
                <MenuSep/>
                <MItem>Remove</MItem>
            </Menu>
            <Menu $x = {1434} $y = {801} $w = {309}>
                <SubRow>Minimum</SubRow>
                <SubRow>Maximum</SubRow>
                <SubRow $hot>Count</SubRow>
                <SubRow>Count (Distinct)</SubRow>
            </Menu>
        </Shell>
    );
};

export default App;
